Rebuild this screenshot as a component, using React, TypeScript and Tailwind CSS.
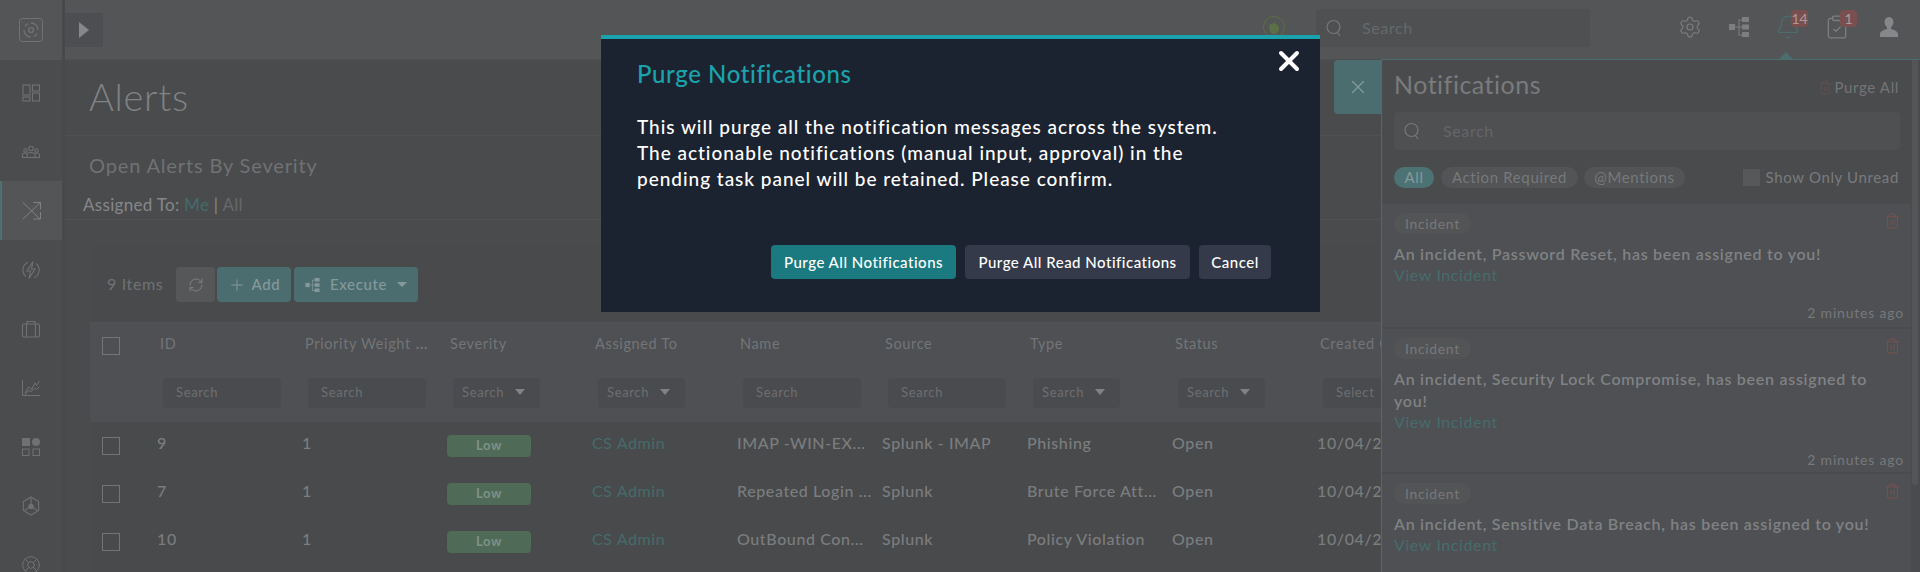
import { Settings, Bell, ClipboardCheck, Trash2, RefreshCw, Plus, X, LifeBuoy } from 'lucide-react';

const SearchIcon = ({ className }: { className: string }) => (
  <svg className={className} viewBox="0 0 18 20" fill="none" stroke="currentColor" strokeWidth={1.2}>
    <circle cx="8.5" cy="9" r="6.5" />
    <path d="M12.5 14.5L15 18" />
  </svg>
);

const TreeIcon = ({ className }: { className: string }) => (
  <svg className={className} viewBox="0 0 20 20" fill="currentColor">
    <rect x="0" y="7" width="6" height="6" />
    <rect x="13" y="0" width="7" height="5" />
    <rect x="13" y="7.5" width="7" height="5" />
    <rect x="13" y="15" width="7" height="5" />
    <path d="M6 9.5h3.500V2.500H13v1H10.500V9.500H13v1H10.500v7H13v1H9.500v-8H6z" />
  </svg>
);

const LogoIcon = () => (
  <svg className="h-[24px] w-[24px] text-[#707274]" viewBox="0 0 24 24" fill="none" stroke="currentColor">
    <rect x="0.5" y="0.5" width="23" height="23" rx="3" strokeWidth={1} />
    <circle cx="12" cy="12" r="2.4" strokeWidth={1.4} />
    <path d="M12 5a7 7 0 0 1 7 7M12 19a7 7 0 0 1-7-7M6 8.500A7 7 0 0 1 9 5.700M18 15.500a7 7 0 0 1-3 2.800" strokeWidth={1.3} />
  </svg>
);

const sideIcon = 'h-[20px] w-[20px] text-[#6f7173]';

const DashIcon = () => (
  <svg className={sideIcon} viewBox="0 0 20 20" fill="none" stroke="currentColor" strokeWidth={1.1}>
    <rect x="2" y="2" width="7" height="10" />
    <rect x="2" y="14" width="7" height="4" />
    <rect x="11.500" y="2" width="7" height="6" />
    <rect x="11.500" y="10" width="7" height="8" />
  </svg>
);

const PeopleIcon = () => (
  <svg className={sideIcon} viewBox="0 0 20 20" fill="none" stroke="currentColor" strokeWidth={1.1}>
    <circle cx="10" cy="6.500" r="2.200" />
    <circle cx="4.500" cy="8.500" r="1.700" />
    <circle cx="15.500" cy="8.500" r="1.700" />
    <path d="M1.500 15v-2c0-1 1.200-2 3-2 .8 0 1.300.2 1.800.5M18.500 15v-2c0-1-1.200-2-3-2-.8 0-1.300.2-1.800.5" />
    <path d="M6 15v-2c0-1.500 1.800-2.500 4-2.500s4 1 4 2.500v2" />
    <path d="M1 15.500h18" />
  </svg>
);

const ShuffleIcon = () => (
  <svg className="h-[20px] w-[20px] text-[#7f8183]" viewBox="0 0 20 20" fill="none" stroke="currentColor" strokeWidth={1}>
    <path d="M1 1.500l17 16.500M1 18L18.500 1.500" />
    <path d="M11.500 1.500h7v7M18.500 11v7h-7" />
  </svg>
);

const BoltIcon = () => (
  <svg className={sideIcon} viewBox="0 0 20 20" fill="none" stroke="currentColor" strokeWidth={1.1}>
    <path d="M7 2.200A8.400 8.400 0 0 0 5 16.500M13 17.800A8.400 8.400 0 0 0 15 3.500" />
    <path d="M12 1.500L6 11h3.500L8 18.500 14 9h-3.500z" />
  </svg>
);

const CaseIcon = () => (
  <svg className={sideIcon} viewBox="0 0 20 20" fill="none" stroke="currentColor" strokeWidth={1.1}>
    <rect x="1.500" y="5" width="17" height="13" rx="1.500" />
    <path d="M6 5V2.500h8V5M5.500 5v13M14.500 5v13" />
  </svg>
);

const ChartIcon = () => (
  <svg className={sideIcon} viewBox="0 0 20 20" fill="none" stroke="currentColor" strokeWidth={1}>
    <path d="M1.500 2v15.500H19" />
    <path d="M4 15l3.500-6 3 2.500L14 5l1.500 2.500L18.500 3" />
    <path d="M4 17l3-4.500 3.500 1 3-3.500 2 1.500 3-3" />
  </svg>
);

const ShapesIcon = () => (
  <svg className={sideIcon} viewBox="0 0 20 20" fill="none" stroke="currentColor" strokeWidth={1}>
    <rect x="1" y="1" width="8" height="8" fill="currentColor" stroke="none" />
    <circle cx="15" cy="5" r="4" fill="currentColor" stroke="none" />
    <rect x="1.500" y="12" width="6.500" height="6.500" />
    <rect x="12" y="12" width="6.500" height="6.500" />
  </svg>
);

const HexIcon = () => (
  <svg className="h-[20px] w-[18px] text-[#6f7173]" viewBox="0 0 20 22" fill="none" stroke="currentColor" strokeWidth={1.2}>
    <path d="M10 1l8.500 5v10L10 21l-8.500-5V6z" />
    <path d="M10 2v7M3 16l5-3.500M17 16l-5-3.500" />
    <circle cx="10" cy="11.500" r="3" fill="currentColor" stroke="none" />
  </svg>
);

const sideItems = [
  { key: 'dash', icon: <DashIcon /> },
  { key: 'people', icon: <PeopleIcon /> },
  { key: 'alerts', active: true, icon: <ShuffleIcon /> },
  { key: 'bolt', icon: <BoltIcon /> },
  { key: 'case', icon: <CaseIcon /> },
  { key: 'chart', icon: <ChartIcon /> },
  { key: 'shapes', icon: <ShapesIcon /> },
  { key: 'hex', icon: <HexIcon /> },
  { key: 'ring', icon: <LifeBuoy className={sideIcon} strokeWidth={1.2} /> },
];

const columns = [
  { title: 'ID', filter: 'Search', drop: false },
  { title: 'Priority Weight', more: true, filter: 'Search', drop: false },
  { title: 'Severity', filter: 'Search', drop: true },
  { title: 'Assigned To', filter: 'Search', drop: true },
  { title: 'Name', filter: 'Search', drop: false },
  { title: 'Source', filter: 'Search', drop: false },
  { title: 'Type', filter: 'Search', drop: true },
  { title: 'Status', filter: 'Search', drop: true },
  { title: 'Created On', filter: 'Select', drop: false },
];

const rows = [
  { id: '9', name: 'IMAP -WIN-EX...', source: 'Splunk - IMAP', type: 'Phishing' },
  { id: '7', name: 'Repeated Login ...', source: 'Splunk', type: 'Brute Force Att...' },
  { id: '10', name: 'OutBound Con...', source: 'Splunk', type: 'Policy Violation' },
];

const notes = [
  { title: 'An incident, Password Reset, has been assigned to you!', time: true, card: 'relative bg-[#4e5053] px-[12px] pb-[4px] pt-[9px]' },
  { title: 'An incident, Security Lock Compromise, has been assigned to you!', time: true, card: 'relative bg-[#4e5053] px-[12px] pb-[2px] pt-[9px]' },
  { title: 'An incident, Sensitive Data Breach, has been assigned to you!', time: false, card: 'relative flex-1 bg-[#4e5053] px-[12px] pt-[9px]' },
];

const Box = () => <span className="h-[18px] w-[18px] shrink-0 border border-[#737577]" />;

export default function App() {
  return (
    <div className="relative flex h-[572px] w-[1920px] overflow-hidden bg-[#4a4b4d] font-['Lato',sans-serif] tracking-[0.04em]">
      {/* sidebar */}
      <aside className="flex w-[65px] shrink-0 flex-col border-r-[3px] border-[#47494b] bg-[#4a4c4e]">
        <div className="flex h-[60px] shrink-0 items-center justify-center bg-[#535557]">
          <LogoIcon />
        </div>
        <div className="flex flex-col pt-[3px]">
          {sideItems.map((item) => (
            <div
              key={item.key}
              className={
                item.active
                  ? 'flex h-[59px] items-center justify-center border-l-2 border-[#4d7173] bg-[#535557]'
                  : 'flex h-[59px] items-center justify-center'
              }
            >
              {item.icon}
            </div>
          ))}
        </div>
      </aside>

      <div className="flex min-w-0 flex-1 flex-col">
        {/* top bar */}
        <header className="flex h-[61px] shrink-0 items-center border-b-2 border-[#4c4e50] bg-[#535557]">
          <button className="flex h-[34px] w-[38px] items-center justify-center bg-[#4c4e51]">
            <svg className="h-[16px] w-[10px] text-[#85878a]" viewBox="0 0 10 16" fill="currentColor">
              <path d="M0 0l10 8-10 8z" />
            </svg>
          </button>
          <svg className="ml-[1160px] h-[22px] w-[22px] -translate-y-[3px] text-[#5b7044]" viewBox="0 0 22 22" fill="none" stroke="currentColor" strokeWidth={1}>
            <circle cx="11" cy="11" r="10.500" />
            <path d="M6 11c0-3 2-4 4-3.500 1-1 2-2 3-2-1 1-1 2-1 2.500 2 0 4 1 4 4 0 3-2 6-5 6s-5-3-5-7z" fill="currentColor" stroke="none" />
          </svg>
          <div className="ml-[31px] flex h-[38px] w-[274px] -translate-y-[2px] items-center rounded-sm bg-[#4e5052]">
            <SearchIcon className="ml-[9px] h-[20px] w-[18px] text-[#76787a]" />
            <span className="ml-[19px] text-[16px] text-[#66686a]">Search</span>
          </div>
          <div className="ml-[75px] flex -translate-y-[3px] items-center">
            <div className="flex w-[49px] justify-center">
              <Settings className="h-[24px] w-[24px] text-[#7c7e80]" strokeWidth={1.1} />
            </div>
            <div className="flex w-[49px] justify-center">
              <TreeIcon className="h-[22px] w-[20px] text-[#7c7e80]" />
            </div>
            <div className="relative flex w-[49px] justify-center">
              <Bell className="h-[26px] w-[26px] text-[#4a6e70]" strokeWidth={1.1} />
              <span className="absolute left-[28px] top-[-4px] flex h-[17px] w-[17px] items-center justify-center rounded-sm bg-[#7a4f4f] text-[14px] tracking-normal text-[#a99b9b]">14</span>
            </div>
            <div className="relative flex w-[49px] justify-center">
              <ClipboardCheck className="h-[26px] w-[26px] text-[#7c7e80]" strokeWidth={1.2} />
              <span className="absolute left-[28px] top-[-4px] flex h-[17px] w-[17px] items-center justify-center rounded-sm bg-[#7a4f4f] text-[14px] tracking-normal text-[#a99b9b]">1</span>
            </div>
            <svg className="ml-[19px] h-[20px] w-[18px] text-[#85878a]" viewBox="0 0 18 20" fill="currentColor">
              <path d="M9 0c2.800 0 4.400 2.200 4.400 5 0 2.300-1 4.200-2.400 5.300v1.700c3 .7 7 2.300 7 5V20H0v-3c0-2.700 4-4.300 7-5v-1.700C5.600 9.200 4.600 7.300 4.600 5 4.600 2.200 6.200 0 9 0z" />
            </svg>
          </div>
        </header>

        {/* page */}
        <main className="flex min-h-0 flex-1 flex-col">
          <div className="flex h-[75px] shrink-0 items-center border-b border-[#4f5153] pb-[5px] pl-[24px]">
            <h1 className="text-[38px] font-light leading-none tracking-[0.7px] text-[#808284]">Alerts</h1>
          </div>
          <div className="flex h-[84px] shrink-0 flex-col border-b border-[#4f5153] pl-[24px]">
            <h2 className="mt-[19px] text-[20px] leading-[20px] tracking-[0.85px] text-[#707274]">Open Alerts By Severity</h2>
            <p className="ml-[-6px] mt-[20px] text-[17px] leading-[20px] tracking-[0.3px] text-[#85878a]">
              Assigned To: <span className="text-[#426d6c]">Me</span> | <span className="text-[#66686a]">All</span>
            </p>
          </div>

          <section className="ml-[25px] mt-[26px] flex-1 bg-[#494a4c]">
            <div className="flex h-[76px] items-start pl-[17px] pt-[21px]">
              <span className="mt-[7px] w-[69px] text-[16px] leading-[20px] text-[#707274]">9 Items</span>
              <button className="flex h-[35px] w-[39px] items-center justify-center rounded-sm bg-[#565759]">
                <RefreshCw className="h-[16px] w-[16px] text-[#808284]" strokeWidth={1.4} />
              </button>
              <button className="ml-[2px] flex h-[35px] w-[74px] items-center justify-center gap-[6px] rounded-sm bg-[#4c6d70] text-[15px] font-medium text-[#85999b]">
                <Plus className="h-[18px] w-[18px]" strokeWidth={1.3} />
                Add
              </button>
              <button className="ml-[3px] flex h-[35px] w-[124px] items-center justify-center rounded-sm bg-[#4c6d70] text-[15px] font-medium text-[#85999b]">
                <TreeIcon className="mr-[10px] h-[14px] w-[15px]" />
                Execute
                <span className="ml-[10px] h-0 w-0 border-x-[5px] border-t-[5px] border-x-transparent border-t-[#85999b]" />
              </button>
            </div>

            <div className="w-[1291px] overflow-hidden">
              <div className="flex h-[100px] items-start border-t border-[#515355] bg-[#4e5053]">
                <div className="flex w-[67px] shrink-0 pl-[12px] pt-[14px]">
                  <Box />
                </div>
                {columns.map((col) => (
                  <div key={col.title} className="w-[145px] shrink-0">
                    <div className="flex h-[55px] items-start whitespace-nowrap pl-[3px] pt-[11px] text-[14.5px] leading-[20px] text-[#737578]">
                      {col.title}
                      {col.more && <span className="ml-[5px] font-bold">...</span>}
                    </div>
                    <div className={col.drop ? 'ml-[6px] flex h-[30px] w-[87px] items-center rounded-sm bg-[#4a4b4e] pl-[9px] text-[13px] text-[#6d6f71]' : 'ml-[6px] flex h-[30px] w-[118px] items-center rounded-sm bg-[#4a4b4e] pl-[13px] text-[13px] text-[#6d6f71]'}>
                      {col.filter}
                      {col.drop && <span className="ml-[11px] h-0 w-0 -translate-y-[1px] border-x-[5px] border-t-[6px] border-x-transparent border-t-[#808284]" />}
                    </div>
                  </div>
                ))}
              </div>

              {rows.map((row) => (
                <div key={row.id} className="flex h-[48px] items-center text-[16px] font-medium tracking-[0.6px] text-[#7b7d7f]">
                  <div className="flex w-[67px] shrink-0 pl-[12px]">
                    <Box />
                  </div>
                  <span className="w-[145px] shrink-0 pb-[7px]">{row.id}</span>
                  <span className="w-[145px] shrink-0 pb-[7px]">1</span>
                  <div className="w-[145px] shrink-0">
                    <span className="flex h-[22px] w-[84px] items-center justify-center rounded-sm bg-[#4f6b58] text-[13px] font-bold text-[#7f9186]">Low</span>
                  </div>
                  <span className="w-[145px] shrink-0 pb-[7px] font-normal text-[#446c6b]">CS Admin</span>
                  <span className="w-[145px] shrink-0 whitespace-nowrap pb-[7px]">{row.name}</span>
                  <span className="w-[145px] shrink-0 whitespace-nowrap pb-[7px]">{row.source}</span>
                  <span className="w-[145px] shrink-0 whitespace-nowrap pb-[7px]">{row.type}</span>
                  <span className="w-[145px] shrink-0 pb-[7px]">Open</span>
                  <span className="w-[145px] shrink-0 whitespace-nowrap pb-[7px]">10/04/2022</span>
                </div>
              ))}
            </div>
          </section>
        </main>
      </div>

      {/* notifications panel */}
      <div className="absolute bottom-0 left-[1381px] right-0 top-[59px] flex flex-col border-l border-t border-[#4b6d6e] bg-[#4a4b4d]">
        <span className="absolute right-[127px] top-[-8px] h-0 w-0 border-x-[7px] border-b-[7px] border-x-transparent border-b-[#4b6d6e]" />
        <span className="absolute right-[2px] top-0 h-[425px] w-[6px] rounded-b-sm bg-[#535557]" />
        <button className="absolute left-[-48px] top-0 flex h-[54px] w-[47px] items-center justify-center rounded-l-sm bg-[#4c6d70]">
          <X className="h-[22px] w-[22px] text-[#85999b]" strokeWidth={1.3} />
        </button>
        <div className="flex items-center justify-between pl-[12px] pr-[21px] pt-[8px]">
          <h3 className="text-[25px] leading-[32px] tracking-[0.5px] text-[#797b7d]">Notifications</h3>
          <span className="mt-[6px] flex items-center gap-[2px] text-[15px] text-[#737577]">
            <Trash2 className="h-[17px] w-[15px] text-[#6a5253]" strokeWidth={1.2} />
            Purge All
          </span>
        </div>
        <div className="ml-[12px] mr-[20px] mt-[12px] flex h-[38px] shrink-0 items-center rounded-sm bg-[#4e5052]">
          <SearchIcon className="ml-[9px] h-[20px] w-[18px] text-[#76787a]" />
          <span className="ml-[22px] text-[16px] text-[#646668]">Search</span>
        </div>
        <div className="mt-[17px] flex h-[21px] shrink-0 items-center pl-[12px] pr-[21px] text-[15px]">
          <span className="flex h-[21px] w-[40px] items-center justify-center rounded-full bg-[#4c7274] text-[#85999b]">All</span>
          <span className="ml-[7px] flex h-[21px] w-[137px] items-center justify-center rounded-full bg-[#525456] text-[#77797b]">Action Required</span>
          <span className="ml-[6px] flex h-[21px] w-[101px] items-center justify-center rounded-full bg-[#525456] text-[#77797b]">@Mentions</span>
          <span className="ml-auto h-[17px] w-[17px] bg-[#575859]" />
          <span className="ml-[6px] whitespace-nowrap text-[#797b7d]">Show Only Unread</span>
        </div>
        <div className="mr-[9px] mt-[16px] flex min-h-0 flex-1 flex-col gap-[2px]">
          {notes.map((note) => (
            <article key={note.title} className={note.card}>
              <span className="flex h-[21px] w-[77px] items-center justify-center rounded-full bg-[#525456] text-[14px] text-[#77797b]">Incident</span>
              <Trash2 className="absolute right-[10px] top-[8px] h-[18px] w-[17px] text-[#7a4f50]" strokeWidth={1.5} />
              <p className="mt-[9px] text-[16px] font-semibold leading-[22px] tracking-[0.72px] text-[#808284]">{note.title}</p>
              <p className="text-[16px] leading-[20px] tracking-[0.6px] text-[#466c6c]">View Incident</p>
              {note.time && <p className="mr-[-5px] mt-[18px] text-right text-[14px] leading-[20px] tracking-[0.8px] text-[#77797b]">2 minutes ago</p>}
            </article>
          ))}
        </div>
      </div>

      {/* purge dialog */}
      <div className="absolute left-[601px] top-[35px] h-[277px] w-[719px] border-t-4 border-[#1aa3ad] bg-[#1c2330] pl-[36px]">
        <button className="absolute right-[15px] top-[6px]">
          <X className="h-[32px] w-[32px] text-white" strokeWidth={3} />
        </button>
        <h2 className="mt-[21px] text-[24px] font-medium leading-[28px] tracking-[0.6px] text-[#1aa3ad]">Purge Notifications</h2>
        <p className="mt-[26px] w-[660px] text-[19px] font-medium leading-[26px] tracking-[0.97px] text-white">
          This will purge all the notification messages across the system.
          <br />
          The actionable notifications (manual input, approval) in the
          <br />
          pending task panel will be retained. Please confirm.
        </p>
        <div className="mt-[53px] flex justify-end gap-[9px] pr-[49px] text-[15px] font-medium tracking-[0.5px]">
          <button className="h-[34px] w-[185px] rounded-sm bg-[#1b7a80] text-white">Purge All Notifications</button>
          <button className="h-[34px] w-[225px] rounded-sm bg-[#343a4a] text-white">Purge All Read Notifications</button>
          <button className="h-[34px] w-[72px] rounded-sm bg-[#343a4a] text-white">Cancel</button>
        </div>
      </div>
    </div>
  );
}
